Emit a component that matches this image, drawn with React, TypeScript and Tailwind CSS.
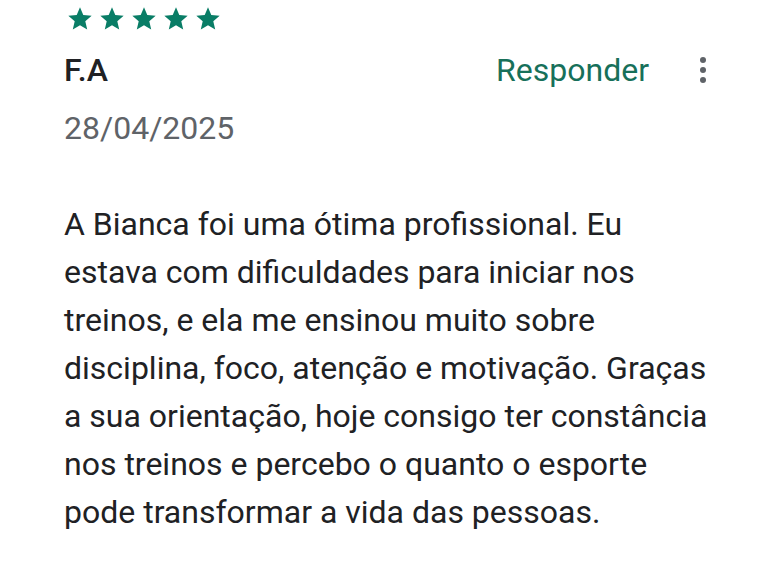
const LINES = [
  "A Bianca foi uma ótima profissional. Eu",
  "estava com dificuldades para iniciar nos",
  "treinos, e ela me ensinou muito sobre",
  "disciplina, foco, atenção e motivação. Graças",
  "a sua orientação, hoje consigo ter constância",
  "nos treinos e percebo o quanto o esporte",
  "pode transformar a vida das pessoas.",
];

function Star() {
  return (
    <svg viewBox="0 0 24 24" className="h-[28px] w-[28px]" fill="#097d66">
      <path d="M12 17.27 18.18 21l-1.64-7.03L22 9.24l-7.19-.61L12 2 9.19 8.63 2 9.24l5.46 4.73L5.82 21z" />
    </svg>
  );
}

export default function App() {
  return (
    <div className="min-h-[575px] w-[768px] bg-white pl-[64px] pr-[61px] pt-[5px] font-['Roboto',sans-serif]">
      <div className="ml-[2px] flex gap-[4px]">
        {[0, 1, 2, 3, 4].map((i) => (
          <Star key={i} />
        ))}
      </div>

      <div className="mt-[17px] flex items-center">
        <span className="text-[32px] font-medium leading-[40px] text-[#202124]">F.A</span>
        <span className="ml-auto text-[32px] leading-[40px] text-[#17705a]">Responder</span>
        <div className="ml-[50px] flex w-[8px] flex-col items-center gap-[4px]">
          <span className="h-[6px] w-[6px] rounded-full bg-[#5f6368]" />
          <span className="h-[6px] w-[6px] rounded-full bg-[#5f6368]" />
          <span className="h-[6px] w-[6px] rounded-full bg-[#5f6368]" />
        </div>
      </div>

      <div className="mt-[18px] text-[32px] leading-[40px] text-[#5f6368]">28/04/2025</div>

      <p className="mt-[52px] text-[32px] leading-[48px] text-[#202124]">
        {LINES.map((l, i) => (
          <span key={i} className="block whitespace-nowrap">
            {l}
          </span>
        ))}
      </p>
    </div>
  );
}
